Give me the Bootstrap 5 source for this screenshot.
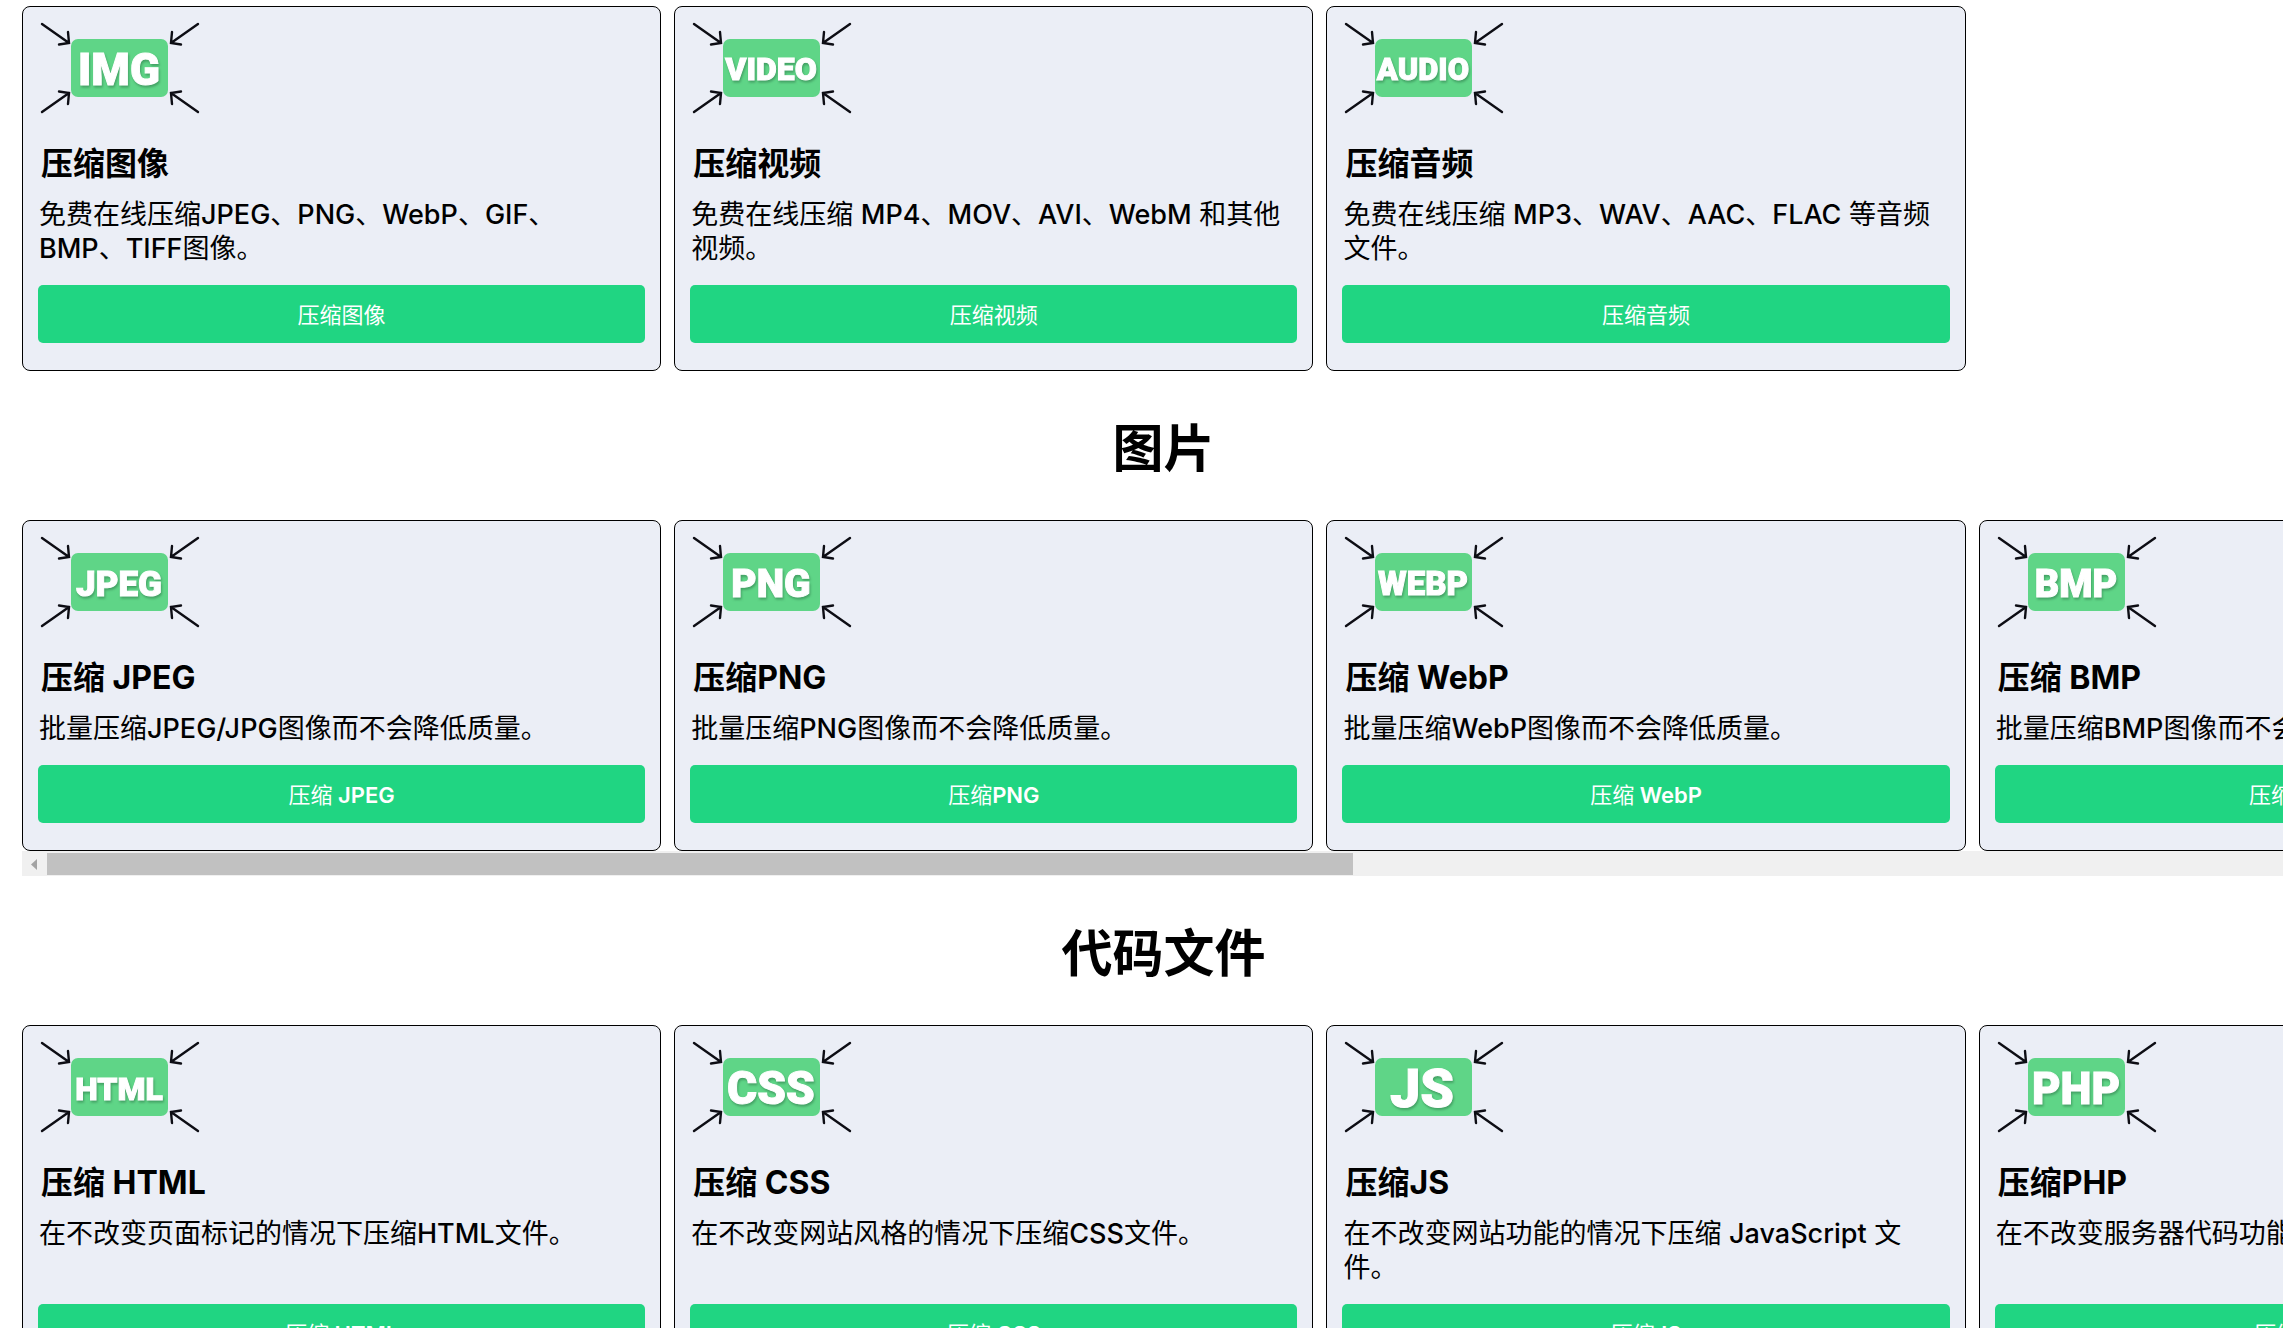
<!DOCTYPE html>
<html lang="zh-CN">
<head>
<meta charset="utf-8">
<meta name="viewport" content="width=device-width, initial-scale=1">
<title>压缩工具</title>
<link href="https://cdn.jsdelivr.net/npm/bootstrap@5.3.0/dist/css/bootstrap.min.css" rel="stylesheet">
<style>
body { font-family: Inter, "Noto Sans CJK SC", sans-serif; color: #000; background: #fff; overflow: hidden; }
.page-wrap { padding: 6px 0 0 22px; }
.shelf { width: 100vw; }
.shelf-row { gap: 13px; }
.tool-card { flex: 0 0 28%; background: #ebeef6; border: 1px solid #000; border-radius: 8px; padding: 15px 15px 27px; }
.tool-icon { width: 160px; height: 92px; margin: 0 0 26px 2px; }
.tool-icon text { fill: #fff; stroke: #fff; stroke-width: 1px; font-family: Roboto, "Liberation Sans", sans-serif; font-weight: 900; text-anchor: middle; filter: drop-shadow(1px 2px 1px rgba(40, 110, 65, .5)); }
.tool-name { font-size: 32px; line-height: 48px; font-weight: 700; margin: 0 0 10px 3px; }
.tool-text { font-size: 27px; line-height: 34px; font-weight: 400; margin: 0 0 19px 1px; }
.tool-text span { font-weight: 500; }
.tool-btn { height: 58px; padding: 7px 12px 5px; background: #20d582; color: #fff; font-size: 22px; line-height: 30px; font-weight: 600; border: 0; border-radius: 5px; }
.tool-btn span { font-weight: 400; }
.shelf-title { font-size: 51px; line-height: 69px; font-weight: 700; margin: 0; padding: 43px 0 37px; }
.scroll-track { height: 25px; background: #f0f0f0; }
.scroll-arrow { width: 25px; height: 24px; }
.scroll-thumb { width: 57.2%; height: 22px; background: #c1c1c1; }
</style>
</head>
<body>
<svg class="d-none">
  <symbol id="squeeze" viewBox="0 0 160 92">
    <rect x="31" y="17" width="97" height="58" rx="7" fill="#5fd587"/>
    <g fill="none" stroke="#0d0d14" stroke-width="2.4" stroke-linecap="round">
      <path d="M2 2 29 21M28 10 29 21 19 22.500"/>
      <path d="M158 2 131 21M132 10 131 21 141 22.500"/>
      <path d="M2 90 29 71M28 82 29 71 19 69.500"/>
      <path d="M158 90 131 71M132 82 131 71 141 69.500"/>
    </g>
  </symbol>
</svg>
<main class="page-wrap">
  <section class="shelf">
    <div class="d-flex shelf-row">
      <article class="tool-card d-flex flex-column">
        <svg class="tool-icon" viewBox="0 0 160 92"><use href="#squeeze"/><text x="79" y="63" font-size="44">IMG</text></svg>
        <h2 class="tool-name">压缩图像</h2>
        <p class="tool-text">免费在线压缩<span>JPEG</span>、<span>PNG</span>、<span>WebP</span>、<span>GIF</span>、<br><span>BMP</span>、<span>TIFF</span>图像。</p>
        <button type="button" class="btn tool-btn w-100 mt-auto"><span>压缩图像</span></button>
      </article>
      <article class="tool-card d-flex flex-column">
        <svg class="tool-icon" viewBox="0 0 160 92"><use href="#squeeze"/><text x="79" y="58" font-size="32">VIDEO</text></svg>
        <h2 class="tool-name">压缩视频</h2>
        <p class="tool-text">免费在线压缩 <span>MP4</span>、<span>MOV</span>、<span>AVI</span>、<span>WebM</span> 和其他视频。</p>
        <button type="button" class="btn tool-btn w-100 mt-auto"><span>压缩视频</span></button>
      </article>
      <article class="tool-card d-flex flex-column">
        <svg class="tool-icon" viewBox="0 0 160 92"><use href="#squeeze"/><text x="79" y="58" font-size="31">AUDIO</text></svg>
        <h2 class="tool-name">压缩音频</h2>
        <p class="tool-text">免费在线压缩 <span>MP3</span>、<span>WAV</span>、<span>AAC</span>、<span>FLAC</span> 等音频文件。</p>
        <button type="button" class="btn tool-btn w-100 mt-auto"><span>压缩音频</span></button>
      </article>
    </div>
  </section>

  <section class="shelf">
    <h1 class="shelf-title text-center">图片</h1>
    <div class="d-flex shelf-row">
      <article class="tool-card d-flex flex-column">
        <svg class="tool-icon" viewBox="0 0 160 92"><use href="#squeeze"/><text x="79" y="60" font-size="35">JPEG</text></svg>
        <h2 class="tool-name">压缩 JPEG</h2>
        <p class="tool-text">批量压缩<span>JPEG/JPG</span>图像而不会降低质量。</p>
        <button type="button" class="btn tool-btn w-100 mt-auto"><span>压缩</span> JPEG</button>
      </article>
      <article class="tool-card d-flex flex-column">
        <svg class="tool-icon" viewBox="0 0 160 92"><use href="#squeeze"/><text x="79" y="61" font-size="39">PNG</text></svg>
        <h2 class="tool-name">压缩PNG</h2>
        <p class="tool-text">批量压缩<span>PNG</span>图像而不会降低质量。</p>
        <button type="button" class="btn tool-btn w-100 mt-auto"><span>压缩</span>PNG</button>
      </article>
      <article class="tool-card d-flex flex-column">
        <svg class="tool-icon" viewBox="0 0 160 92"><use href="#squeeze"/><text x="79" y="59" font-size="33">WEBP</text></svg>
        <h2 class="tool-name">压缩 WebP</h2>
        <p class="tool-text">批量压缩<span>WebP</span>图像而不会降低质量。</p>
        <button type="button" class="btn tool-btn w-100 mt-auto"><span>压缩</span> WebP</button>
      </article>
      <article class="tool-card d-flex flex-column">
        <svg class="tool-icon" viewBox="0 0 160 92"><use href="#squeeze"/><text x="79" y="61" font-size="38">BMP</text></svg>
        <h2 class="tool-name">压缩 BMP</h2>
        <p class="tool-text">批量压缩<span>BMP</span>图像而不会降低质量。</p>
        <button type="button" class="btn tool-btn w-100 mt-auto"><span>压缩</span> BMP</button>
      </article>
    </div>
    <div class="scroll-track d-flex align-items-center">
      <svg class="scroll-arrow" viewBox="0 0 25 24"><path d="M15 7v11l-6-5.500z" fill="#a3a3a3"/></svg>
      <div class="scroll-thumb"></div>
    </div>
  </section>

  <section class="shelf">
    <h1 class="shelf-title text-center">代码文件</h1>
    <div class="d-flex shelf-row">
      <article class="tool-card d-flex flex-column">
        <svg class="tool-icon" viewBox="0 0 160 92"><use href="#squeeze"/><text x="79" y="59" font-size="32">HTML</text></svg>
        <h2 class="tool-name">压缩 HTML</h2>
        <p class="tool-text">在不改变页面标记的情况下压缩<span>HTML</span>文件。</p>
        <button type="button" class="btn tool-btn w-100 mt-auto"><span>压缩</span> HTML</button>
      </article>
      <article class="tool-card d-flex flex-column">
        <svg class="tool-icon" viewBox="0 0 160 92"><use href="#squeeze"/><text x="79" y="63" font-size="46">CSS</text></svg>
        <h2 class="tool-name">压缩 CSS</h2>
        <p class="tool-text">在不改变网站风格的情况下压缩<span>CSS</span>文件。</p>
        <button type="button" class="btn tool-btn w-100 mt-auto"><span>压缩</span> CSS</button>
      </article>
      <article class="tool-card d-flex flex-column">
        <svg class="tool-icon" viewBox="0 0 160 92"><use href="#squeeze"/><text x="78" y="66" font-size="54">JS</text></svg>
        <h2 class="tool-name">压缩JS</h2>
        <p class="tool-text">在不改变网站功能的情况下压缩 <span>JavaScript</span> 文<br>件。</p>
        <button type="button" class="btn tool-btn w-100 mt-auto"><span>压缩</span>JS</button>
      </article>
      <article class="tool-card d-flex flex-column">
        <svg class="tool-icon" viewBox="0 0 160 92"><use href="#squeeze"/><text x="79" y="63" font-size="44">PHP</text></svg>
        <h2 class="tool-name">压缩PHP</h2>
        <p class="tool-text">在不改变服务器代码功能的情况下压缩<span>PHP</span>文件。</p>
        <button type="button" class="btn tool-btn w-100 mt-auto"><span>压缩</span>PHP</button>
      </article>
    </div>
  </section>
</main>
<script src="https://cdn.jsdelivr.net/npm/bootstrap@5.3.0/dist/js/bootstrap.bundle.min.js"></script>
</body>
</html>
